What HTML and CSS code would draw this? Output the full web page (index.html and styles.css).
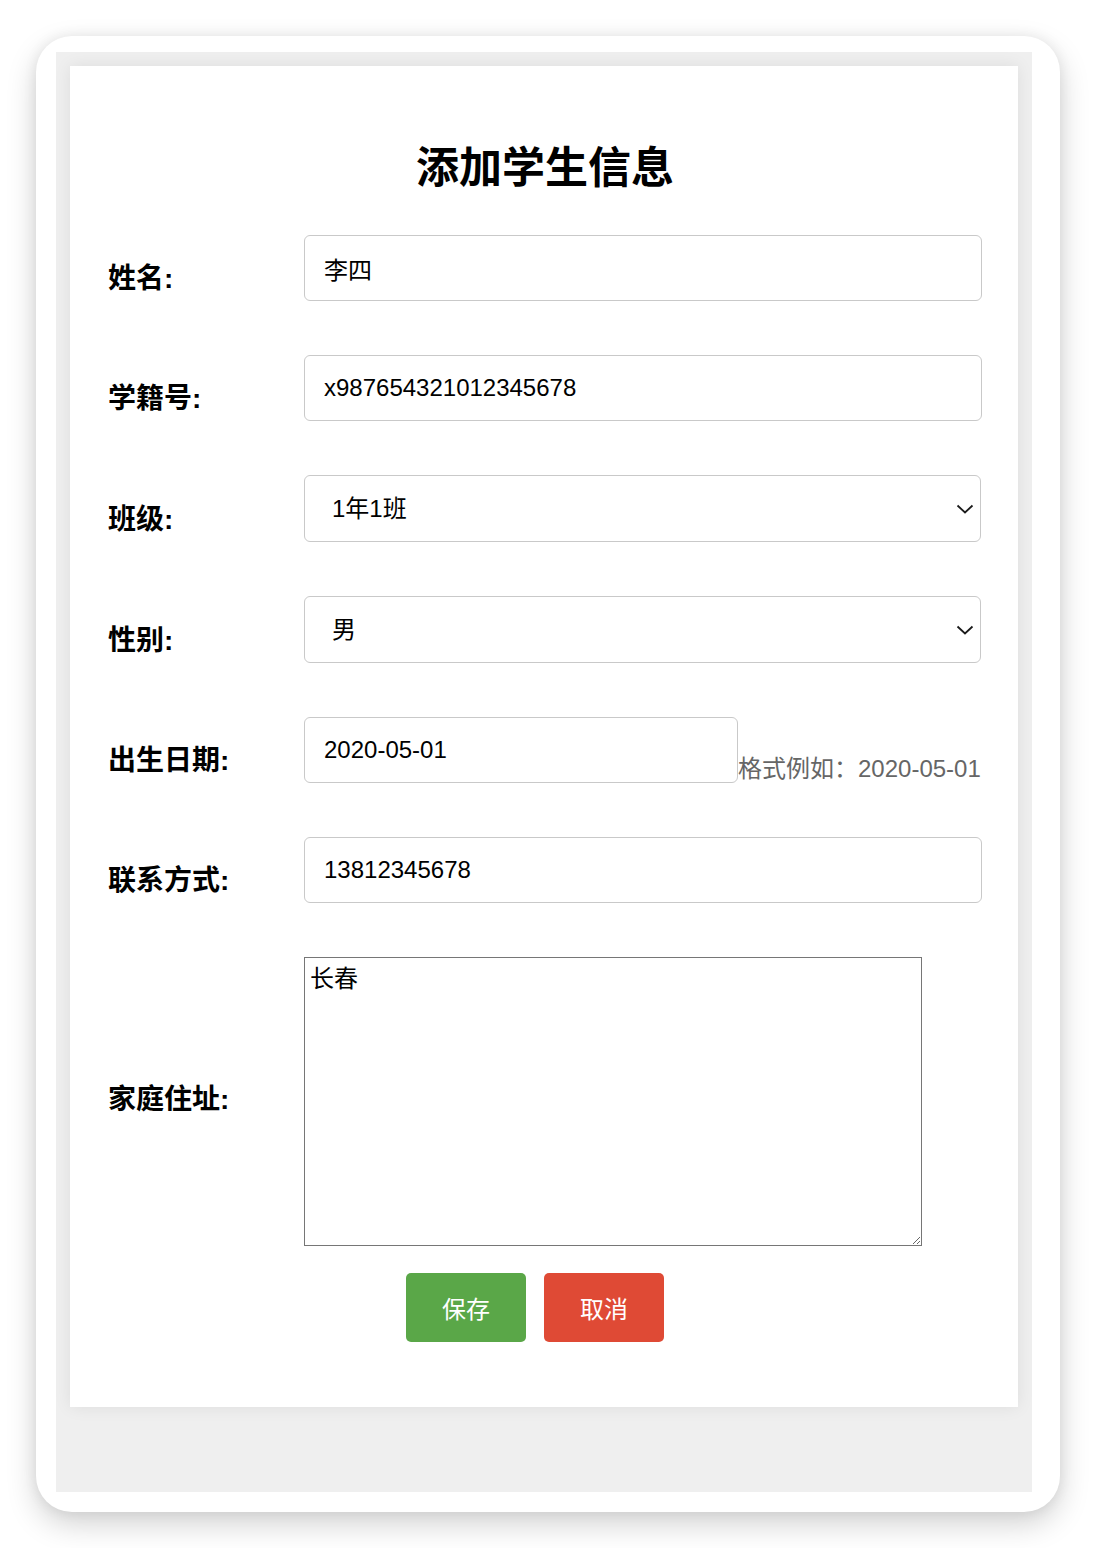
FILE: index.html
```html
<!DOCTYPE html>
<html lang="zh-CN">
<head>
  <meta charset="UTF-8" />
  <meta name="viewport" content="width=device-width, initial-scale=1.0"/>
  <title>添加学生信息</title>
  <link rel="stylesheet" href="styles.css">
</head>
<body>

  <div class="window">
    <div class="page">

      <!-- 表单卡片 -->
      <div class="card">
        <h1>添加学生信息</h1>

        <form class="student-form">
          <div class="form-row">
            <label for="name">姓名:</label>
            <div class="control">
              <input type="text" id="name" value="李四">
            </div>
          </div>

          <div class="form-row">
            <label for="sno">学籍号:</label>
            <div class="control">
              <input type="text" id="sno" value="x987654321012345678">
            </div>
          </div>

          <div class="form-row">
            <label for="klass">班级:</label>
            <div class="control select-wrap">
              <select id="klass">
                <option>1年1班</option>
                <option>1年2班</option>
              </select>
              <svg class="chevron" width="18" height="10" viewBox="0 0 18 10">
                <polyline points="1.5,1.5 9,8.5 16.5,1.5" fill="none" stroke="#1a1a1a" stroke-width="1.8"/>
              </svg>
            </div>
          </div>

          <div class="form-row">
            <label for="sex">性别:</label>
            <div class="control select-wrap">
              <select id="sex">
                <option>男</option>
                <option>女</option>
              </select>
              <svg class="chevron" width="18" height="10" viewBox="0 0 18 10">
                <polyline points="1.5,1.5 9,8.5 16.5,1.5" fill="none" stroke="#1a1a1a" stroke-width="1.8"/>
              </svg>
            </div>
          </div>

          <div class="form-row">
            <label for="birth">出生日期:</label>
            <div class="control date-line">
              <input type="text" id="birth" class="date-input" value="2020-05-01">
              <span class="hint">格式例如：2020-05-01</span>
            </div>
          </div>

          <div class="form-row">
            <label for="tel">联系方式:</label>
            <div class="control">
              <input type="text" id="tel" value="13812345678">
            </div>
          </div>

          <div class="form-row area-row">
            <label for="addr">家庭住址:</label>
            <div class="control">
              <textarea id="addr">长春</textarea>
            </div>
          </div>

          <div class="actions">
            <button type="button" class="btn btn-save">保存</button>
            <button type="button" class="btn btn-cancel">取消</button>
          </div>
        </form>
      </div>

    </div>
  </div>

</body>
</html>
```

FILE: styles.css
```css
* {
  box-sizing: border-box;
}

body {
  margin: 0;
  padding: 36px;
  background: #fff;
  font-family: "Liberation Sans", "Noto Sans CJK SC", sans-serif;
  color: #000;
}

.window {
  width: 1024px;
  height: 1476px;
  background: #fff;
  border-radius: 36px;
  padding: 16px 28px 20px 20px;
  box-shadow: 0 12px 30px rgba(0,0,0,0.18), 0 0 14px rgba(0,0,0,0.07);
}

.page {
  height: 100%;
  background: #efefef;
  padding: 14px;
}

.card {
  width: 948px;
  background: #fff;
  padding: 76px 36px 65px 38px;
  box-shadow: 0 0 16px rgba(0,0,0,0.08);
}

h1 {
  margin: 0 0 41px 0;
  text-align: center;
  font-size: 43px;
  line-height: 52px;
  font-weight: bold;
}

.form-row {
  display: grid;
  grid-template-columns: 196px 1fr;
  align-items: center;
  margin-bottom: 36px;
}

.form-row label {
  font-size: 28px;
  font-weight: bold;
  line-height: 36px;
  padding-top: 4px;
}

.control {
  padding-bottom: 18px;
}

.control input,
.control select {
  display: block;
  width: 100%;
  height: 66px;
  border: 1px solid #c9c9c9;
  border-radius: 6px;
  padding: 0 19px;
  font-family: inherit;
  font-size: 24px;
  color: #000;
  background: #fff;
  outline: none;
}

.select-wrap {
  position: relative;
}

.control select {
  width: 677px;
  height: 67px;
  padding-left: 27px;
  -webkit-appearance: none;
  appearance: none;
}

.chevron {
  position: absolute;
  top: 29px;
  left: 652px;
  pointer-events: none;
}

.date-line {
  display: flex;
  align-items: flex-end;
}

.control .date-input {
  width: 434px;
  flex: 0 0 auto;
}

.hint {
  font-size: 24px;
  line-height: 28px;
  color: #666;
  white-space: nowrap;
}

.area-row {
  margin-bottom: 27px;
}

.area-row label {
  padding-top: 0;
  padding-bottom: 4px;
}

.area-row .control {
  padding-bottom: 0;
}

textarea {
  display: block;
  width: 618px;
  height: 289px;
  border: 1px solid #767676;
  padding: 1px 5px;
  font-family: inherit;
  font-size: 24px;
  color: #000;
  resize: both;
}

.actions {
  display: flex;
  gap: 18px;
  padding-left: 298px;
}

.btn {
  width: 120px;
  height: 69px;
  border: none;
  border-radius: 5px;
  color: #fff;
  font-family: inherit;
  font-size: 24px;
  cursor: pointer;
}

.btn-save {
  background: #5aa748;
}

.btn-cancel {
  background: #df4a35;
}
```
